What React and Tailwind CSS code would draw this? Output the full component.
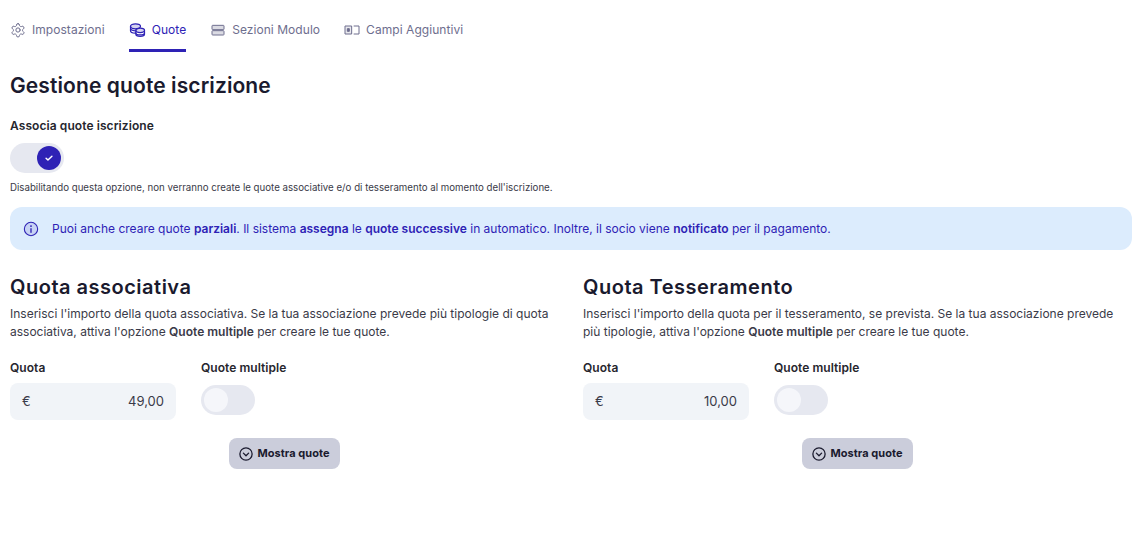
import React from "react";

const Gear = () => (
  <svg width="16" height="16" viewBox="0 0 24 24" fill="none" stroke="currentColor" strokeWidth="1.5" strokeLinecap="round" strokeLinejoin="round">
    <path d="M12.2 2.5h-.4a2 2 0 0 0-2 2v.2a2 2 0 0 1-1 1.7l-.4.3a2 2 0 0 1-2 0l-.2-.1a2 2 0 0 0-2.7.7l-.2.4a2 2 0 0 0 .7 2.7l.2.1a2 2 0 0 1 1 1.7v.5a2 2 0 0 1-1 1.7l-.2.1a2 2 0 0 0-.7 2.7l.2.4a2 2 0 0 0 2.7.7l.2-.1a2 2 0 0 1 2 0l.4.3a2 2 0 0 1 1 1.7v.2a2 2 0 0 0 2 2h.4a2 2 0 0 0 2-2v-.2a2 2 0 0 1 1-1.7l.4-.3a2 2 0 0 1 2 0l.2.1a2 2 0 0 0 2.7-.7l.2-.4a2 2 0 0 0-.7-2.7l-.2-.1a2 2 0 0 1-1-1.7v-.5a2 2 0 0 1 1-1.7l.2-.1a2 2 0 0 0 .7-2.7l-.2-.4a2 2 0 0 0-2.7-.7l-.2.1a2 2 0 0 1-2 0l-.4-.3a2 2 0 0 1-1-1.7v-.2a2 2 0 0 0-2-2z" />
    <circle cx="12" cy="12" r="3.2" />
  </svg>
);
const Coins = () => (
  <svg width="17" height="16" viewBox="0 0 24 24" fill="none" stroke="currentColor" strokeWidth="1.8" strokeLinecap="round" strokeLinejoin="round">
    <ellipse cx="9" cy="6.5" rx="7.5" ry="3.8" fill="currentColor" fillOpacity="0.2" />
    <path d="M1.5 6.5v3c0 2 3.2 3.6 7 3.8" />
    <path d="M1.5 10v3c0 2 3.2 3.6 7 3.8" />
    <ellipse cx="16" cy="12.5" rx="6.5" ry="3.3" fill="currentColor" fillOpacity="0.2" />
    <path d="M9.5 12.5v3.5c0 1.9 2.9 3.4 6.5 3.4s6.5-1.5 6.5-3.4v-3.5" />
    <path d="M9.5 16v2.5c0 1.9 2.9 3 6.5 3s6.5-1.1 6.5-3V16" />
  </svg>
);
const Rows = () => (
  <svg width="16" height="16" viewBox="0 0 24 24" fill="none" stroke="currentColor" strokeWidth="1.5" strokeLinejoin="round">
    <rect x="3" y="5" width="18" height="6.5" rx="1" fill="currentColor" fillOpacity="0.25" />
    <rect x="3" y="13" width="18" height="6.5" rx="1" fill="currentColor" fillOpacity="0.25" />
  </svg>
);
const Fields = () => (
  <svg width="16" height="16" viewBox="0 0 24 24" fill="none" stroke="currentColor" strokeWidth="1.5" strokeLinejoin="round">
    <rect x="1.5" y="6" width="10" height="12" fill="currentColor" fillOpacity="0.15" />
    <path d="M14.5 6h8v12h-8" />
    <rect x="5" y="10" width="3" height="4" fill="currentColor" />
  </svg>
);
const Info = () => (
  <svg width="16" height="16" viewBox="0 0 24 24" fill="none" stroke="currentColor" strokeWidth="1.6" strokeLinecap="round">
    <circle cx="12" cy="12" r="10" fill="currentColor" fillOpacity="0.12" />
    <path d="M12 11.5v5.5" strokeWidth="2" />
    <circle cx="12" cy="7.6" r="0.6" fill="currentColor" />
  </svg>
);
const Check = () => (
  <svg width="10" height="10" viewBox="0 0 24 24" fill="none" stroke="white" strokeWidth="3.5" strokeLinecap="round" strokeLinejoin="round">
    <path d="M5 12.5l4.5 4.5L19 8" />
  </svg>
);
const ChevronCircle = () => (
  <svg width="14" height="14" viewBox="0 0 24 24" fill="none" stroke="currentColor" strokeWidth="2.2" strokeLinecap="round" strokeLinejoin="round">
    <circle cx="12" cy="12" r="10.5" />
    <path d="M7.5 10.5l4.5 4.5 4.5-4.5" />
  </svg>
);

function Tab({ icon, label, active }) {
  return (
    <div className={active
      ? "h-[42px] flex items-center gap-[6px] border-b-[3px] border-[#2e22b5] text-[#2e22b5]"
      : "h-[42px] flex items-center gap-[6px] border-b-[3px] border-transparent text-[#6e6e8e]"}>
      {icon}
      <span className="text-[12px] leading-4 tracking-[0.05px]">{label}</span>
    </div>
  );
}

function Toggle({ on }) {
  return (
    <div className="w-[54px] h-[30px] rounded-full bg-[#e6e8f0] p-[3px] flex items-center">
      {on ? (
        <div className="ml-auto w-6 h-6 rounded-full bg-[#2e22b5] flex items-center justify-center"><Check /></div>
      ) : (
        <div className="w-6 h-6 rounded-full bg-[#f5f6fa]" />
      )}
    </div>
  );
}

function QuotaSection({ title, desc, value }) {
  return (
    <section className="flex-1 min-w-0">
      <h2 className="text-[20px] leading-[28px] font-semibold tracking-[0.5px] text-[#1a1a2e] mb-[4px]">{title}</h2>
      <p className="text-[12px] leading-[18px] text-[#3a3a48]">{desc}</p>
      <div className="flex gap-[25px] mt-[19px]">
        <div className="w-[166px]">
          <div className="text-[12px] leading-4 font-semibold tracking-[0.05px] text-[#26262e] mb-[7px]">Quota</div>
          <div className="h-[37px] rounded-lg bg-[#f1f4f8] flex items-center justify-between px-3 pt-[1px] text-[13px] text-[#3a3a48]">
            <span>€</span><span>{value}</span>
          </div>
        </div>
        <div>
          <div className="text-[12px] leading-4 font-semibold tracking-[0.05px] text-[#26262e] mb-[9px]">Quote multiple</div>
          <Toggle />
        </div>
      </div>
      <div className="flex justify-center mt-[18px]">
        <button className="h-[31px] w-[111px] rounded-lg bg-[#cbcddb] flex items-center justify-center gap-1 text-[11px] tracking-[0.05px] font-bold text-[#1a1a2e]">
          <ChevronCircle />Mostra quote
        </button>
      </div>
    </section>
  );
}

export default function App() {
  return (
    <div className="min-h-[551px] bg-white px-[10px] pt-[10px] text-[#1a1a2e]" style={{ fontFamily: "Inter, sans-serif" }}>
      <nav className="flex gap-[24px]">
        <Tab icon={<Gear />} label="Impostazioni" />
        <Tab icon={<Coins />} label="Quote" active />
        <Tab icon={<Rows />} label="Sezioni Modulo" />
        <Tab icon={<Fields />} label="Campi Aggiuntivi" />
      </nav>
      <h1 className="text-[21px] leading-7 font-semibold tracking-[0.1px] mt-[20px] text-[#1a1a2e]">Gestione quote iscrizione</h1>
      <div className="text-[12px] leading-4 font-semibold tracking-[0.08px] text-[#26262e] mt-[18px] mb-[9px]">Associa quote iscrizione</div>
      <Toggle on />
      <p className="text-[9.7px] leading-3 text-[#3a3a48] mt-[9px]">Disabilitando questa opzione, non verranno create le quote associative e/o di tesseramento al momento dell'iscrizione.</p>
      <div className="mt-[13px] h-[43px] w-[1122px] rounded-xl bg-[#dcecfd] flex items-center gap-[13px] px-[13px] text-[#2e22b5]">
        <Info />
        <p className="text-[12px] leading-4">Puoi anche creare quote <b className="font-semibold">parziali</b>. Il sistema <b className="font-semibold">assegna</b> le <b className="font-semibold">quote successive</b> in automatico. Inoltre, il socio viene <b className="font-semibold">notificato</b> per il pagamento.</p>
      </div>
      <div className="flex gap-[24px] mt-[23px] w-[1122px]">
        <QuotaSection title="Quota associativa" value="49,00" desc={<>Inserisci l'importo della quota associativa. Se la tua associazione prevede più tipologie di quota associativa, attiva l'opzione <b className="font-semibold">Quote multiple</b> per creare le tue quote.</>} />
        <QuotaSection title="Quota Tesseramento" value="10,00" desc={<>Inserisci l'importo della quota per il tesseramento, se prevista. Se la tua associazione prevede più tipologie, attiva l'opzione <b className="font-semibold">Quote multiple</b> per creare le tue quote.</>} />
      </div>
    </div>
  );
}
